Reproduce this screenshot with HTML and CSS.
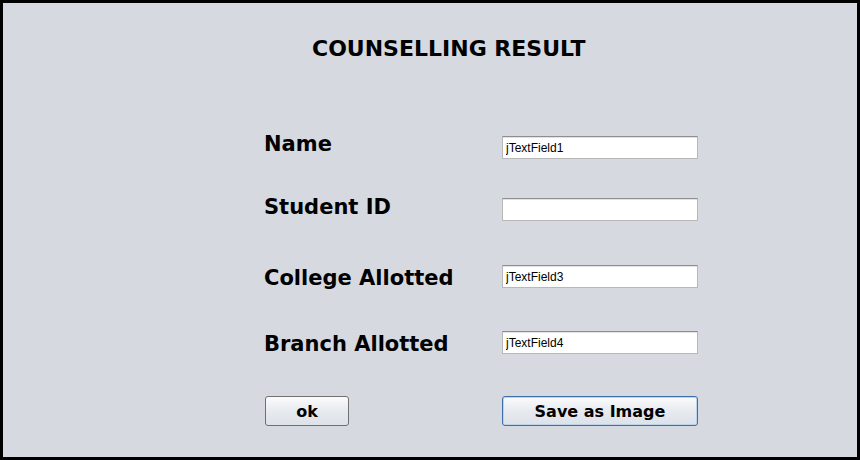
FILE: index.html
```html
<!DOCTYPE html>
<html>
<head>
<meta charset="utf-8">
<link rel="stylesheet" href="styles.css">
</head>
<body>
<div class="frame">
  <div class="title">COUNSELLING RESULT</div>
  <div class="form">
    <div class="row">
      <div class="label l-name">Name</div>
      <input class="field" type="text" value="jTextField1" readonly>
    </div>
    <div class="row row-2">
      <div class="label l-id">Student ID</div>
      <input class="field" type="text" value="" readonly>
    </div>
    <div class="row row-3">
      <div class="label l-low">College Allotted</div>
      <input class="field" type="text" value="jTextField3" readonly>
    </div>
    <div class="row row-4">
      <div class="label l-low">Branch Allotted</div>
      <input class="field" type="text" value="jTextField4" readonly>
    </div>
    <div class="row row-btn">
      <div class="btn-cell"><button class="btn btn-ok">ok</button></div>
      <button class="btn btn-save">Save as Image</button>
    </div>
  </div>
</div>
</body>
</html>
```
FILE: styles.css
```css
html, body {
  margin: 0;
  padding: 0;
}
.frame {
  width: 860px;
  height: 460px;
  box-sizing: border-box;
  border: 3px solid #000;
  background: #d6d9e0;
  padding-top: 32px;
  font-family: "DejaVu Sans", Verdana, sans-serif;
  color: #000;
}
.title {
  margin-left: 309px;
  font-size: 22px;
  line-height: 27px;
  font-weight: bold;
  white-space: nowrap;
}
.form {
  margin-left: 261px;
  margin-top: 74px;
}
.row {
  display: flex;
  height: 23px;
  align-items: flex-start;
}
.row-2 { margin-top: 39px; }
.row-3 { margin-top: 44px; }
.row-4 { margin-top: 43px; }
.row-btn { margin-top: 42px; height: 30px; }
.label {
  width: 238px;
  flex: none;
  font-size: 21px;
  line-height: 23px;
  font-weight: bold;
  white-space: nowrap;
}
.l-name { margin-top: -3px; }
.l-id { margin-top: -2px; }
.l-low { margin-top: 2px; }
.field {
  width: 196px;
  height: 23px;
  box-sizing: border-box;
  margin: 0;
  padding: 0 0 0 3px;
  background: #fff;
  border: 1px solid #b8b8b8;
  border-top: 1px solid #8e8e8e;
  box-shadow: inset 0 1px 0 #e2e2e2;
  font-family: "Liberation Sans", Arial, sans-serif;
  font-size: 12px;
  color: #000;
  outline: none;
}
.btn-cell {
  width: 238px;
  flex: none;
  padding-left: 1px;
  box-sizing: border-box;
}
.btn {
  height: 30px;
  box-sizing: border-box;
  margin: 0;
  padding: 0;
  border: 1px solid #707070;
  border-radius: 3px;
  background: linear-gradient(#fbfbfc, #e7eaef 50%, #dde1e8);
  font-family: "DejaVu Sans", Verdana, sans-serif;
  font-weight: bold;
  font-size: 16px;
  color: #000;
}
.btn-ok {
  width: 84px;
}
.btn-save {
  width: 196px;
  border-color: #3d6fa8;
  box-shadow: inset 0 0 0 1px #bcd3ec;
}
```
